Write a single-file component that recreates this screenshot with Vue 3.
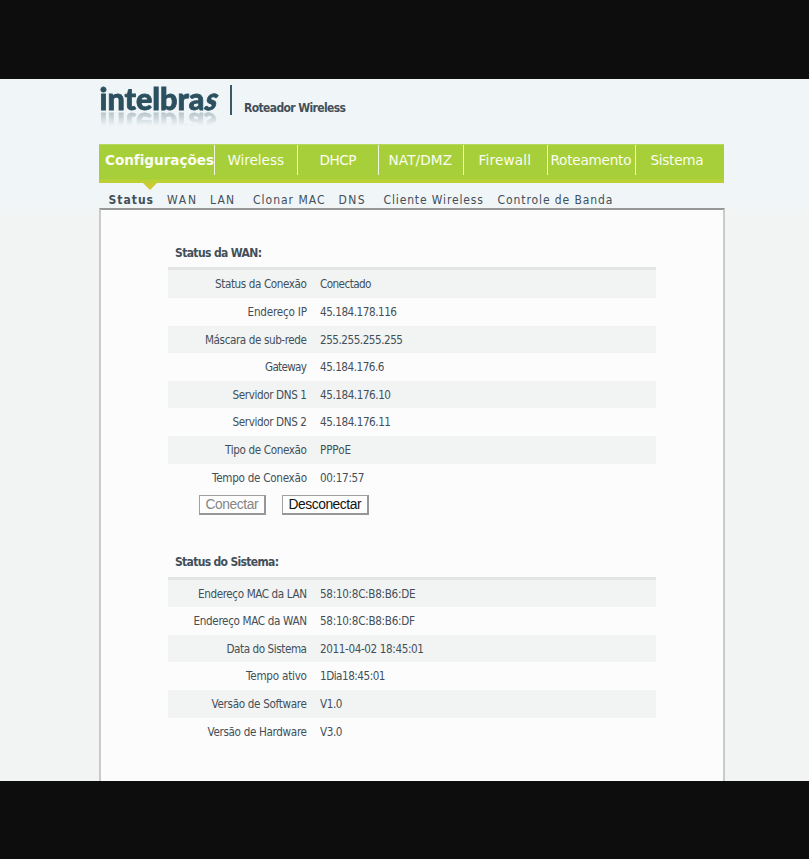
<script setup>
const tabs = [
  { label: 'Configurações', cell: 116, pad: 6, width: 108.5, active: true },
  { label: 'Wireless', cell: 83, pad: 12.5, width: 56.5 },
  { label: 'DHCP', cell: 81, pad: 21.5, width: 37 },
  { label: 'NAT/DMZ', cell: 85, pad: 9.5, width: 63.5 },
  { label: 'Firewall', cell: 84, pad: 14.5, width: 52.5 },
  { label: 'Roteamento', cell: 88, pad: 2.5, width: 81 },
  { label: 'Sistema', cell: 88, pad: 14.5, width: 53 },
]
const links = [
  { label: 'Status', gap: 9.5, width: 44.5, active: true },
  { label: 'WAN', gap: 14, width: 29 },
  { label: 'LAN', gap: 14, width: 24 },
  { label: 'Clonar MAC', gap: 19, width: 71.5 },
  { label: 'DNS', gap: 14, width: 26 },
  { label: 'Cliente Wireless', gap: 19, width: 99.5 },
  { label: 'Controle de Banda', gap: 14.5, width: 115 },
]
const wan = [
  ['Status da Conexão', 92, 'Conectado', 51.5],
  ['Endereço IP', 59.5, '45.184.178.116', 77],
  ['Máscara de sub-rede', 102, '255.255.255.255', 83],
  ['Gateway', 42, '45.184.176.6', 64.5],
  ['Servidor DNS 1', 74.5, '45.184.176.10', 71],
  ['Servidor DNS 2', 74.5, '45.184.176.11', 71],
  ['Tipo de Conexão', 82, 'PPPoE', 31],
  ['Tempo de Conexão', 95, '00:17:57', 44.5],
]
const system = [
  ['Endereço MAC da LAN', 109, '58:10:8C:B8:B6:DE', 95.5],
  ['Endereço MAC da WAN', 113.5, '58:10:8C:B8:B6:DF', 95],
  ['Data do Sistema', 80.5, '2011-04-02 18:45:01', 104],
  ['Tempo ativo', 61, '1Dia18:45:01', 65.5],
  ['Versão de Software', 95.5, 'V1.0', 22.5],
  ['Versão de Hardware', 99.5, 'V3.0', 22.5],
]

// Spreads the letters so that a label takes the given width.
const vFit = {
  mounted(el, { value }) {
    const natural = el.getBoundingClientRect().width
    const n = el.textContent.length
    const spacing = (value - natural) / (n - 1)
    el.style.letterSpacing = spacing + 'px'
    el.style.marginRight = -spacing + 'px'
  },
}
</script>

<template>
  <div class="page">
    <div class="screen">
      <header class="header">
        <svg class="logo" width="122" height="27" viewBox="0 0 122 27">
          <text class="brand" x="0" y="0" transform="translate(-0.5 25.4) scale(1 0.97)" textLength="105" lengthAdjust="spacingAndGlyphs">intelbra</text>
          <text class="brand" x="0" y="0" transform="translate(103 25.4) scale(1 0.97) skewX(-16)" textLength="12" lengthAdjust="spacingAndGlyphs">s</text>
        </svg>
        <span class="rule"></span>
        <span class="product"><span v-fit="102" class="fit">Roteador Wireless</span></span>
      </header>

      <nav class="tabs">
        <div
          v-for="t in tabs"
          :key="t.label"
          class="tab"
          :class="{ active: t.active }"
          :style="{ width: t.cell + 'px', paddingLeft: t.pad + 'px' }"
        >
          <span v-fit="t.width" class="fit">{{ t.label }}</span>
        </div>
      </nav>
      <div class="pointer"></div>

      <nav class="links">
        <span v-for="l in links" :key="l.label" class="link" :class="{ active: l.active }" :style="{ marginLeft: l.gap + 'px' }">
          <span v-fit="l.width" class="fit">{{ l.label }}</span>
        </span>
      </nav>

      <main class="panel">
        <section class="block">
          <h2><span v-fit="87" class="fit">Status da WAN:</span></h2>
          <div class="rows">
            <div v-for="r in wan" :key="r[0]" class="row">
              <div class="name"><span v-fit="r[1]" class="fit">{{ r[0] }}</span></div>
              <div class="value"><span v-fit="r[3]" class="fit">{{ r[2] }}</span></div>
            </div>
          </div>
        </section>
        <div class="buttons">
          <button class="connect" disabled><span v-fit="53" class="fit">Conectar</span></button>
          <button class="disconnect"><span v-fit="73" class="fit">Desconectar</span></button>
        </div>
        <section class="block">
          <h2><span v-fit="104" class="fit">Status do Sistema:</span></h2>
          <div class="rows">
            <div v-for="r in system" :key="r[0]" class="row">
              <div class="name"><span v-fit="r[1]" class="fit">{{ r[0] }}</span></div>
              <div class="value"><span v-fit="r[3]" class="fit">{{ r[2] }}</span></div>
            </div>
          </div>
        </section>
      </main>
    </div>
  </div>
</template>

<style>
body {
  background: #0d0d0d;
}
</style>

<style scoped>
.page {
  box-sizing: border-box;
  width: 809px;
  height: 859px;
  padding: 79px 0 78px;
  background: #0d0d0d;
  color: #424f59;
  font-family: 'DejaVu Sans Condensed', 'DejaVu Sans', sans-serif;
  font-stretch: condensed;
  overflow: hidden;
}
.page * {
  box-sizing: border-box;
}
.screen {
  display: flex;
  flex-direction: column;
  height: 702px;
  padding-left: 99px;
  background: linear-gradient(#f0f5f7 0, #f0f5f7 120px, #f2f4f4 136px);
}
.fit {
  display: inline-block;
  white-space: nowrap;
}
.header {
  display: flex;
  height: 65px;
  padding: 6px 0 0 1px;
}
.logo {
  display: block;
  flex: none;
  margin-right: 8px;
  overflow: visible;
  -webkit-box-reflect: below -1px linear-gradient(transparent 45%, rgba(0, 0, 0, 0.32));
}
.brand {
  font: 900 32px Lato, 'DejaVu Sans', sans-serif;
  fill: #2b5060;
  stroke: #2b5060;
  stroke-width: 0.8px;
}
.rule {
  width: 1.5px;
  height: 30px;
  background: #3d5968;
}
.product {
  margin-left: 12.5px;
  padding-top: 15px;
  font-size: 12px;
  font-weight: bold;
  line-height: 16px;
}
.tabs {
  display: flex;
  flex: none;
  width: 625px;
  height: 39px;
  background: linear-gradient(#a7cf39 0, #a7cf39 34px, #bbd034 35px);
  border-top: 1px solid #b7d85c;
}
.tab {
  flex: none;
  height: 30px;
  border-right: 1px solid #f0f5e0;
  color: #fbfdf3;
  font-family: 'DejaVu Sans', sans-serif;
  font-stretch: normal;
  font-size: 13.6px;
  line-height: 31px;
}
.tab:last-child {
  border-right: 0;
}
.tab.active {
  font-weight: bold;
}
.pointer {
  flex: none;
  width: 14px;
  height: 7px;
  margin-left: 44px;
  background: #cbca32;
  clip-path: polygon(0 0, 100% 0, 50% 100%);
}
.links {
  display: flex;
  flex: none;
  height: 18px;
  font-size: 12px;
  line-height: 20px;
}
.link.active {
  font-weight: bold;
}
.panel {
  flex: none;
  width: 626px;
  height: 573px;
  padding: 37px 67px 0 68px;
  border: solid #c9cbcb;
  border-width: 2px 2px 0;
  border-top-color: #969898;
  background: #fcfcfc;
}
h2 {
  height: 20.4px;
  margin: 0 0 0 6px;
  font-size: 12px;
  font-weight: bold;
  line-height: 13px;
}
.rows {
  width: 488px;
  margin-left: -1px;
  border-top: 3px solid #e3e5e4;
}
.row {
  display: flex;
  height: 27.6px;
  font-size: 11.6px;
  line-height: 29px;
}
.row:nth-child(odd) {
  background: #f2f4f4;
}
.name {
  width: 139px;
  text-align: right;
}
.value {
  margin-left: 13px;
}
.buttons {
  display: flex;
  gap: 16px;
  height: 65px;
  padding: 4px 0 0 30px;
}
button {
  height: 20px;
  padding: 0;
  border: 1px solid #a0a0a0;
  border-right: 2px solid #979797;
  border-bottom: 2px solid #979797;
  background: #fefefe;
  color: #111;
  font: 13.8px/17px 'Liberation Sans', sans-serif;
}
.connect {
  width: 67px;
  color: #858585;
}
.disconnect {
  width: 87px;
}
</style>
